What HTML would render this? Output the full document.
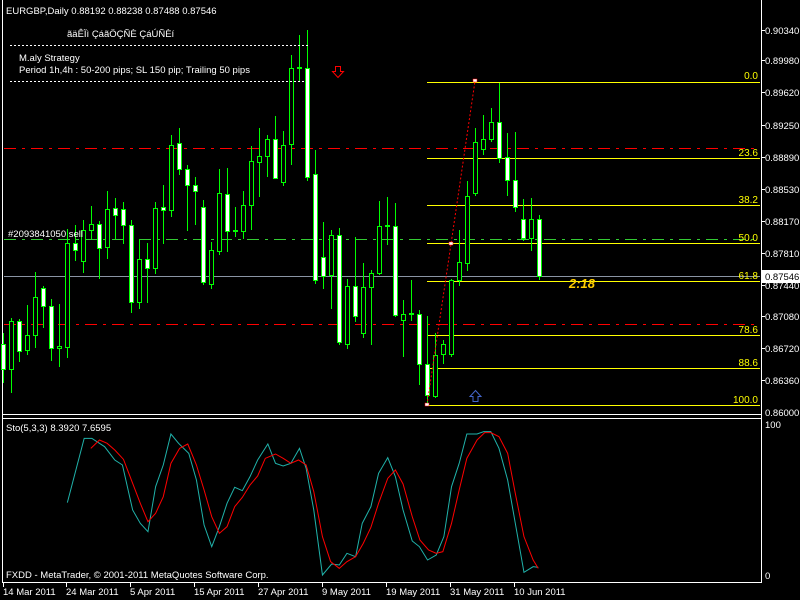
<!DOCTYPE html>
<html><head><meta charset="utf-8"><style>
html,body{margin:0;padding:0;background:#000;width:800px;height:600px;overflow:hidden}
svg{display:block}
text{font-family:"Liberation Sans",sans-serif;font-size:9.5px;fill:#fff}
.w{fill:#fff;stroke:#0f0;stroke-width:1}
.b{fill:#000;stroke:#0f0;stroke-width:1}
.k{stroke:#0f0;stroke-width:1}
.y{stroke:#ff0;stroke-width:1}
.yl{fill:#ff0;text-anchor:end;font-size:10px}
</style></head><body>
<svg width="800" height="600" viewBox="0 0 800 600" xmlns="http://www.w3.org/2000/svg">
<rect width="800" height="600" fill="#000"/>
<line x1="2.5" y1="0" x2="2.5" y2="583" stroke="#fff"/>
<line x1="761.5" y1="0" x2="761.5" y2="583" stroke="#fff"/>
<line x1="2" y1="414.5" x2="762" y2="414.5" stroke="#fff"/>
<line x1="2" y1="418.5" x2="762" y2="418.5" stroke="#fff"/>
<line x1="2" y1="582.5" x2="762" y2="582.5" stroke="#fff"/>
<line x1="4" y1="148.5" x2="760" y2="148.5" stroke="#f00" stroke-dasharray="12,6,3,6"/>
<line x1="4" y1="324.5" x2="760" y2="324.5" stroke="#f00" stroke-dasharray="12,6,3,6"/>
<line x1="4" y1="239.5" x2="760" y2="239.5" stroke="#3c3" stroke-dasharray="12,6,3,6"/>
<line x1="4" y1="276.5" x2="760" y2="276.5" stroke="#8a94a4"/>
<g class="y">
<line x1="427" y1="82.5" x2="760" y2="82.5"/>
<line x1="427" y1="158.5" x2="760" y2="158.5"/>
<line x1="427" y1="205.5" x2="760" y2="205.5"/>
<line x1="427" y1="243.5" x2="760" y2="243.5"/>
<line x1="427" y1="281.5" x2="760" y2="281.5"/>
<line x1="427" y1="335.5" x2="760" y2="335.5"/>
<line x1="427" y1="368.5" x2="760" y2="368.5"/>
<line x1="427" y1="405.5" x2="760" y2="405.5"/>
</g>
<g>
<text class="yl" x="758" y="79">0.0</text>
<text class="yl" x="758" y="156">23.6</text>
<text class="yl" x="758" y="203">38.2</text>
<text class="yl" x="758" y="241">50.0</text>
<text class="yl" x="758" y="279">61.8</text>
<text class="yl" x="758" y="333">78.6</text>
<text class="yl" x="758" y="366">88.6</text>
<text class="yl" x="758" y="403">100.0</text>
</g>
<g>
<line class="k" x1="3.5" y1="333" x2="3.5" y2="383"/><rect class="w" x="1.5" y="344.5" width="4" height="25"/>
<line class="k" x1="11.5" y1="318" x2="11.5" y2="393"/><rect class="b" x="9.5" y="321.5" width="4" height="48"/>
<line class="k" x1="19.5" y1="319" x2="19.5" y2="362"/><rect class="w" x="17.5" y="321.5" width="4" height="30"/>
<line class="k" x1="27.5" y1="305" x2="27.5" y2="355"/><rect class="b" x="25.5" y="335.5" width="4" height="15"/>
<line class="k" x1="35.5" y1="272" x2="35.5" y2="348"/><rect class="b" x="33.5" y="297.5" width="4" height="38"/>
<line class="k" x1="43.5" y1="286" x2="43.5" y2="328"/><rect class="w" x="41.5" y="288.5" width="4" height="18"/>
<line class="k" x1="51.5" y1="299" x2="51.5" y2="361"/><rect class="w" x="49.5" y="306.5" width="4" height="42"/>
<line class="k" x1="59.5" y1="304" x2="59.5" y2="367"/><rect class="b" x="57.5" y="346.5" width="4" height="2"/>
<line class="k" x1="67.5" y1="229" x2="67.5" y2="358"/><rect class="b" x="65.5" y="243.5" width="4" height="104"/>
<line class="k" x1="75.5" y1="225" x2="75.5" y2="261"/><rect class="w" x="73.5" y="243.5" width="4" height="7"/>
<line class="k" x1="83.5" y1="220" x2="83.5" y2="273"/><rect class="b" x="81.5" y="230.5" width="4" height="31"/>
<line class="k" x1="91.5" y1="206" x2="91.5" y2="239"/><rect class="b" x="89.5" y="224.5" width="4" height="6"/>
<line class="k" x1="99.5" y1="221" x2="99.5" y2="279"/><rect class="w" x="97.5" y="224.5" width="4" height="24"/>
<line class="k" x1="107.5" y1="191" x2="107.5" y2="259"/><rect class="b" x="105.5" y="209.5" width="4" height="38"/>
<line class="k" x1="115.5" y1="198" x2="115.5" y2="239"/><rect class="w" x="113.5" y="208.5" width="4" height="7"/>
<line class="k" x1="123.5" y1="202" x2="123.5" y2="244"/><rect class="w" x="121.5" y="209.5" width="4" height="16"/>
<line class="k" x1="131.5" y1="220" x2="131.5" y2="313"/><rect class="w" x="129.5" y="225.5" width="4" height="77"/>
<line class="k" x1="139.5" y1="239" x2="139.5" y2="309"/><rect class="b" x="137.5" y="259.5" width="4" height="43"/>
<line class="k" x1="147.5" y1="243" x2="147.5" y2="303"/><rect class="w" x="145.5" y="259.5" width="4" height="9"/>
<line class="k" x1="155.5" y1="202" x2="155.5" y2="274"/><rect class="b" x="153.5" y="208.5" width="4" height="60"/>
<line class="k" x1="163.5" y1="185" x2="163.5" y2="244"/><rect class="w" x="161.5" y="207.5" width="4" height="3"/>
<line class="k" x1="171.5" y1="135" x2="171.5" y2="217"/><rect class="b" x="169.5" y="145.5" width="4" height="65"/>
<line class="k" x1="179.5" y1="128" x2="179.5" y2="175"/><rect class="w" x="177.5" y="143.5" width="4" height="26"/>
<line class="k" x1="187.5" y1="165" x2="187.5" y2="231"/><rect class="w" x="185.5" y="169.5" width="4" height="16"/>
<line class="k" x1="195.5" y1="177" x2="195.5" y2="225"/><rect class="w" x="193.5" y="185.5" width="4" height="6"/>
<line class="k" x1="203.5" y1="200" x2="203.5" y2="285"/><rect class="w" x="201.5" y="207.5" width="4" height="75"/>
<line class="k" x1="211.5" y1="242" x2="211.5" y2="289"/><rect class="b" x="209.5" y="250.5" width="4" height="34"/>
<line class="k" x1="219.5" y1="169" x2="219.5" y2="255"/><rect class="b" x="217.5" y="193.5" width="4" height="58"/>
<line class="k" x1="227.5" y1="168" x2="227.5" y2="252"/><rect class="w" x="225.5" y="194.5" width="4" height="37"/>
<line class="k" x1="235.5" y1="207" x2="235.5" y2="237"/><rect x="233" y="230" width="5" height="2" fill="#0f0"/>
<line class="k" x1="243.5" y1="191" x2="243.5" y2="239"/><rect class="b" x="241.5" y="205.5" width="4" height="26"/>
<line class="k" x1="251.5" y1="146" x2="251.5" y2="230"/><rect class="b" x="249.5" y="161.5" width="4" height="44"/>
<line class="k" x1="259.5" y1="128" x2="259.5" y2="197"/><rect class="b" x="257.5" y="156.5" width="4" height="6"/>
<line class="k" x1="267.5" y1="135" x2="267.5" y2="177"/><rect class="b" x="265.5" y="139.5" width="4" height="17"/>
<line class="k" x1="275.5" y1="116" x2="275.5" y2="179"/><rect class="w" x="273.5" y="139.5" width="4" height="39"/>
<line class="k" x1="283.5" y1="131" x2="283.5" y2="186"/><rect class="b" x="281.5" y="145.5" width="4" height="37"/>
<line class="k" x1="291.5" y1="55" x2="291.5" y2="165"/><rect class="b" x="289.5" y="68.5" width="4" height="76"/>
<line class="k" x1="299.5" y1="35" x2="299.5" y2="81"/><rect x="297" y="67" width="5" height="2" fill="#0f0"/>
<line class="k" x1="307.5" y1="30" x2="307.5" y2="181"/><rect class="w" x="305.5" y="68.5" width="4" height="109"/>
<line class="k" x1="315.5" y1="150" x2="315.5" y2="284"/><rect class="w" x="313.5" y="174.5" width="4" height="106"/>
<line class="k" x1="323.5" y1="222" x2="323.5" y2="289"/><rect class="w" x="321.5" y="257.5" width="4" height="19"/>
<line class="k" x1="331.5" y1="230" x2="331.5" y2="309"/><rect class="b" x="329.5" y="235.5" width="4" height="40"/>
<line class="k" x1="339.5" y1="228" x2="339.5" y2="345"/><rect class="w" x="337.5" y="235.5" width="4" height="107"/>
<line class="k" x1="347.5" y1="279" x2="347.5" y2="349"/><rect class="b" x="345.5" y="286.5" width="4" height="58"/>
<line class="k" x1="355.5" y1="237" x2="355.5" y2="322"/><rect class="w" x="353.5" y="286.5" width="4" height="30"/>
<line class="k" x1="363.5" y1="263" x2="363.5" y2="338"/><rect class="b" x="361.5" y="287.5" width="4" height="46"/>
<line class="k" x1="371.5" y1="270" x2="371.5" y2="345"/><rect class="b" x="369.5" y="273.5" width="4" height="14"/>
<line class="k" x1="379.5" y1="201" x2="379.5" y2="275"/><rect class="b" x="377.5" y="226.5" width="4" height="47"/>
<line class="k" x1="387.5" y1="197" x2="387.5" y2="245"/><rect x="385" y="225" width="5" height="2" fill="#0f0"/>
<line class="k" x1="395.5" y1="203" x2="395.5" y2="317"/><rect class="w" x="393.5" y="226.5" width="4" height="89"/>
<line class="k" x1="403.5" y1="300" x2="403.5" y2="357"/><rect class="b" x="401.5" y="314.5" width="4" height="6"/>
<line class="k" x1="411.5" y1="280" x2="411.5" y2="321"/><rect x="409" y="313" width="5" height="2" fill="#0f0"/>
<line class="k" x1="419.5" y1="310" x2="419.5" y2="385"/><rect class="w" x="417.5" y="314.5" width="4" height="50"/>
<line class="k" x1="427.5" y1="316" x2="427.5" y2="405"/><rect class="w" x="425.5" y="364.5" width="4" height="31"/>
<line class="k" x1="435.5" y1="333" x2="435.5" y2="398"/><rect class="b" x="433.5" y="355.5" width="4" height="41"/>
<line class="k" x1="443.5" y1="340" x2="443.5" y2="364"/><rect class="b" x="441.5" y="344.5" width="4" height="10"/>
<line class="k" x1="451.5" y1="279" x2="451.5" y2="357"/><rect class="b" x="449.5" y="280.5" width="4" height="74"/>
<line class="k" x1="459.5" y1="230" x2="459.5" y2="286"/><rect class="b" x="457.5" y="262.5" width="4" height="18"/>
<line class="k" x1="467.5" y1="181" x2="467.5" y2="271"/><rect class="b" x="465.5" y="196.5" width="4" height="67"/>
<line class="k" x1="475.5" y1="128" x2="475.5" y2="196"/><rect class="b" x="473.5" y="142.5" width="4" height="51"/>
<line class="k" x1="483.5" y1="115" x2="483.5" y2="155"/><rect class="b" x="481.5" y="139.5" width="4" height="10"/>
<line class="k" x1="491.5" y1="108" x2="491.5" y2="142"/><rect class="b" x="489.5" y="122.5" width="4" height="17"/>
<line class="k" x1="499.5" y1="83" x2="499.5" y2="163"/><rect class="w" x="497.5" y="122.5" width="4" height="36"/>
<line class="k" x1="507.5" y1="133" x2="507.5" y2="196"/><rect class="w" x="505.5" y="157.5" width="4" height="23"/>
<line class="k" x1="515.5" y1="132" x2="515.5" y2="212"/><rect class="w" x="513.5" y="180.5" width="4" height="27"/>
<line class="k" x1="523.5" y1="199" x2="523.5" y2="241"/><rect class="w" x="521.5" y="219.5" width="4" height="19"/>
<line class="k" x1="531.5" y1="198" x2="531.5" y2="251"/><rect class="b" x="529.5" y="219.5" width="4" height="19"/>
<line class="k" x1="539.5" y1="215" x2="539.5" y2="280"/><rect class="w" x="537.5" y="219.5" width="4" height="57"/>
</g>
<polyline points="427,405 451,244 475,81" fill="none" stroke="#f00" stroke-dasharray="2,2"/>
<rect x="425" y="403" width="4" height="3" fill="#fff" stroke="#f00" stroke-width=".5"/>
<rect x="449" y="242" width="4" height="3" fill="#fff" stroke="#f00" stroke-width=".5"/>
<rect x="473" y="79" width="4" height="3" fill="#fff" stroke="#f00" stroke-width=".5"/>
<path d="M335.5,66.5h5v5h3l-5.5,6l-5.5,-6h3z" fill="none" stroke="#f00"/>
<path d="M475.5,390.5l5.5,6h-3v5h-5v-5h-3z" fill="none" stroke="#4466cc"/>
<text x="6" y="14">EURGBP,Daily  0.88192 0.88238 0.87488 0.87546</text>
<text x="67" y="37">ãäÊÏì ÇáãÖÇÑÈ ÇáÚÑÈí</text>
<line x1="10" y1="45.5" x2="309" y2="45.5" stroke="#fff" stroke-dasharray="2,2"/>
<text x="19" y="61">M.aly Strategy</text>
<text x="19" y="73">Period 1h,4h  : 50-200 pips; SL 150 pip; Trailing 50 pips</text>
<line x1="10" y1="81.5" x2="305" y2="81.5" stroke="#fff" stroke-dasharray="2,2"/>
<text x="8" y="237">#2093841050 sell</text>
<text x="569" y="288" style="font-size:13px;font-weight:bold;font-style:italic;fill:#fc0">2:18</text>
<g>
<text x="765" y="34">0.90340</text>
<text x="765" y="64">0.89980</text>
<text x="765" y="96">0.89620</text>
<text x="765" y="129">0.89250</text>
<text x="765" y="161">0.88890</text>
<text x="765" y="193">0.88530</text>
<text x="765" y="225">0.88170</text>
<text x="765" y="257">0.87810</text>
<text x="765" y="289">0.87440</text>
<text x="765" y="320">0.87080</text>
<text x="765" y="352">0.86720</text>
<text x="765" y="384">0.86360</text>
<text x="765" y="416">0.86000</text>
</g>
<rect x="762" y="270" width="38" height="13" fill="#fff"/>
<text x="765" y="280" style="fill:#000">0.87546</text>
<g stroke="#fff">
<line x1="762" y1="30.5" x2="765" y2="30.5"/><line x1="762" y1="60.5" x2="765" y2="60.5"/>
<line x1="762" y1="92.5" x2="765" y2="92.5"/><line x1="762" y1="125.5" x2="765" y2="125.5"/>
<line x1="762" y1="157.5" x2="765" y2="157.5"/><line x1="762" y1="189.5" x2="765" y2="189.5"/>
<line x1="762" y1="221.5" x2="765" y2="221.5"/><line x1="762" y1="253.5" x2="765" y2="253.5"/>
<line x1="762" y1="285.5" x2="765" y2="285.5"/><line x1="762" y1="316.5" x2="765" y2="316.5"/>
<line x1="762" y1="348.5" x2="765" y2="348.5"/><line x1="762" y1="380.5" x2="765" y2="380.5"/>
</g>
<text x="6" y="431">Sto(5,3,3) 8.3920 7.6595</text>
<text x="765" y="428">100</text>
<text x="765" y="579">0</text>
<g transform="translate(0,410) scale(0.5102,0.33333)" fill="none">
<polyline vector-effect="non-scaling-stroke" stroke="#20b2aa" points="132,278 165,85 180,85 205,110 225,150 240,165 260,300 275,340 290,365 305,230 320,165 335,72 350,100 370,130 385,210 400,345 415,410 430,350 445,280 460,232 475,242 490,200 505,150 525,102 540,160 555,168 570,160 587,115 600,175 615,300 632,495 650,462 665,465 680,430 697,440 710,340 727,290 742,190 760,143 775,200 790,300 808,393 822,410 838,450 855,435 870,380 885,230 900,160 915,72 935,72 948,65 962,65 978,115 995,210 1010,340 1027,487 1045,470 1055,472"/>
<polyline vector-effect="non-scaling-stroke" stroke="#f00" points="178,115 195,90 210,100 225,120 242,148 260,220 275,280 290,335 305,310 320,260 335,160 352,115 368,102 385,165 400,240 415,320 430,370 445,350 460,290 475,262 490,225 505,198 520,145 540,132 555,145 570,160 585,150 600,165 615,245 632,380 648,455 665,475 680,455 697,440 712,400 727,352 742,280 760,205 775,180 790,222 808,320 823,390 840,420 855,430 868,425 885,340 900,240 915,145 935,90 950,68 962,68 978,80 995,130 1010,250 1027,380 1045,450 1055,475"/>
</g>
<text x="6" y="578">FXDD - MetaTrader, © 2001-2011 MetaQuotes Software Corp.</text>
<g stroke="#fff">
<line x1="3.5" y1="583" x2="3.5" y2="587"/><line x1="66.5" y1="583" x2="66.5" y2="587"/>
<line x1="130.5" y1="583" x2="130.5" y2="587"/><line x1="194.5" y1="583" x2="194.5" y2="587"/>
<line x1="258.5" y1="583" x2="258.5" y2="587"/><line x1="322.5" y1="583" x2="322.5" y2="587"/>
<line x1="386.5" y1="583" x2="386.5" y2="587"/><line x1="450.5" y1="583" x2="450.5" y2="587"/>
<line x1="514.5" y1="583" x2="514.5" y2="587"/>
</g>
<text x="3" y="595">14 Mar 2011</text>
<text x="66" y="595">24 Mar 2011</text>
<text x="130" y="595">5 Apr 2011</text>
<text x="194" y="595">15 Apr 2011</text>
<text x="258" y="595">27 Apr 2011</text>
<text x="322" y="595">9 May 2011</text>
<text x="386" y="595">19 May 2011</text>
<text x="450" y="595">31 May 2011</text>
<text x="514" y="595">10 Jun 2011</text>
</svg>
</body></html>
